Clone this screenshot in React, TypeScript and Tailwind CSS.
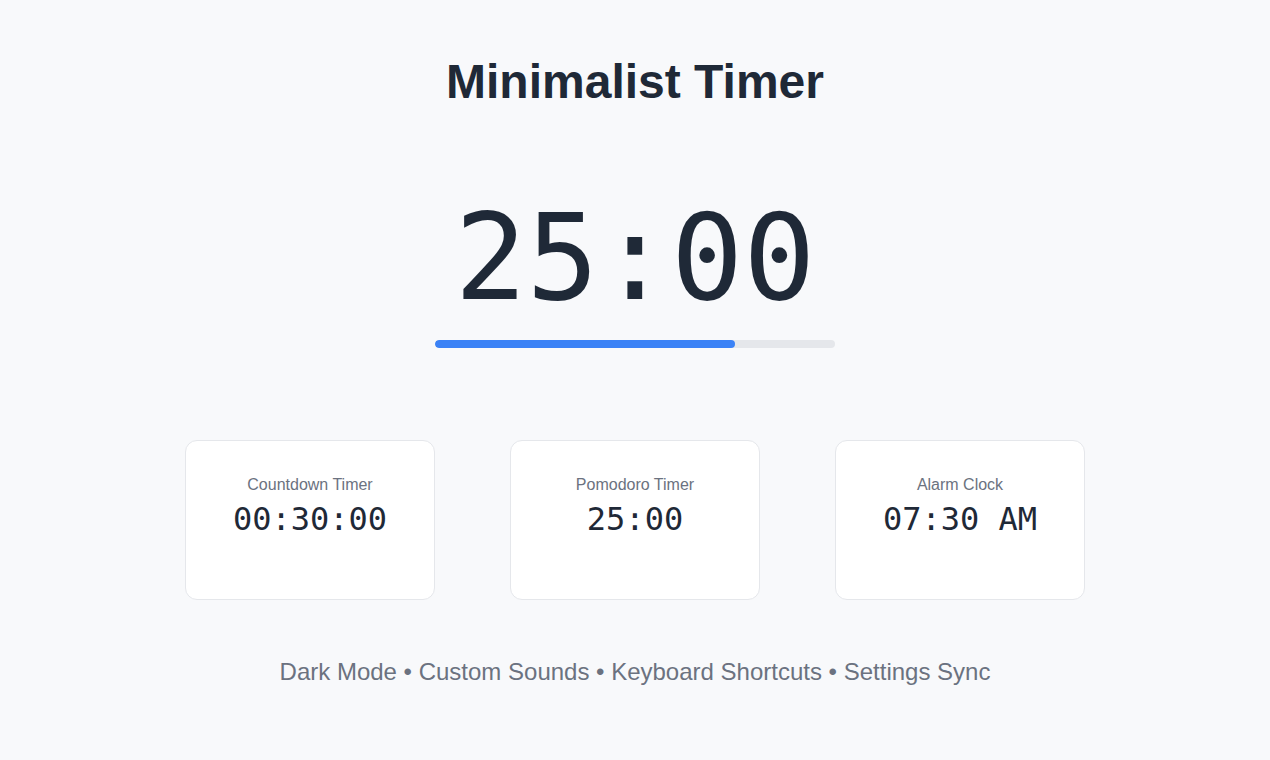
export default function App() {
  const cards = [
    { label: "Countdown Timer", value: "00:30:00" },
    { label: "Pomodoro Timer", value: "25:00" },
    { label: "Alarm Clock", value: "07:30 AM" },
  ];
  return (
    <div
      className="min-h-[760px] w-full bg-[#f8f9fb] flex flex-col items-center pt-[58px]"
      style={{ fontFamily: '"Liberation Sans", Arial, sans-serif' }}
    >
      <h1 className="text-5xl leading-none font-bold text-[#1f2937]">Minimalist Timer</h1>
      <div
        className="mt-[92px] h-[120px] text-[120px] leading-none text-[#1f2937] slashed-zero"
        style={{ fontFamily: '"DejaVu Sans Mono", monospace' }}
      >
        25:00
      </div>
      <div className="mt-[22px] w-[400px] h-2 rounded-full bg-[#e5e7eb] overflow-hidden">
        <div className="h-full w-[300px] rounded-full bg-[#3b82f6]" />
      </div>
      <div className="mt-[92px] flex gap-[75px]">
        {cards.map((c) => (
          <div
            key={c.label}
            className="w-[250px] h-[160px] bg-white border border-[#e5e7eb] rounded-xl pt-[32px] flex flex-col items-center"
          >
            <div className="text-base leading-6 text-[#6b7280]">{c.label}</div>
            <div
              className="text-[32px] leading-[44px] text-[#1f2937] slashed-zero"
              style={{ fontFamily: '"DejaVu Sans Mono", monospace' }}
            >
              {c.value}
            </div>
          </div>
        ))}
      </div>
      <div className="mt-[56px] text-2xl leading-8 text-[#6b7280]">
        Dark Mode • Custom Sounds • Keyboard Shortcuts • Settings Sync
      </div>
    </div>
  );
}
